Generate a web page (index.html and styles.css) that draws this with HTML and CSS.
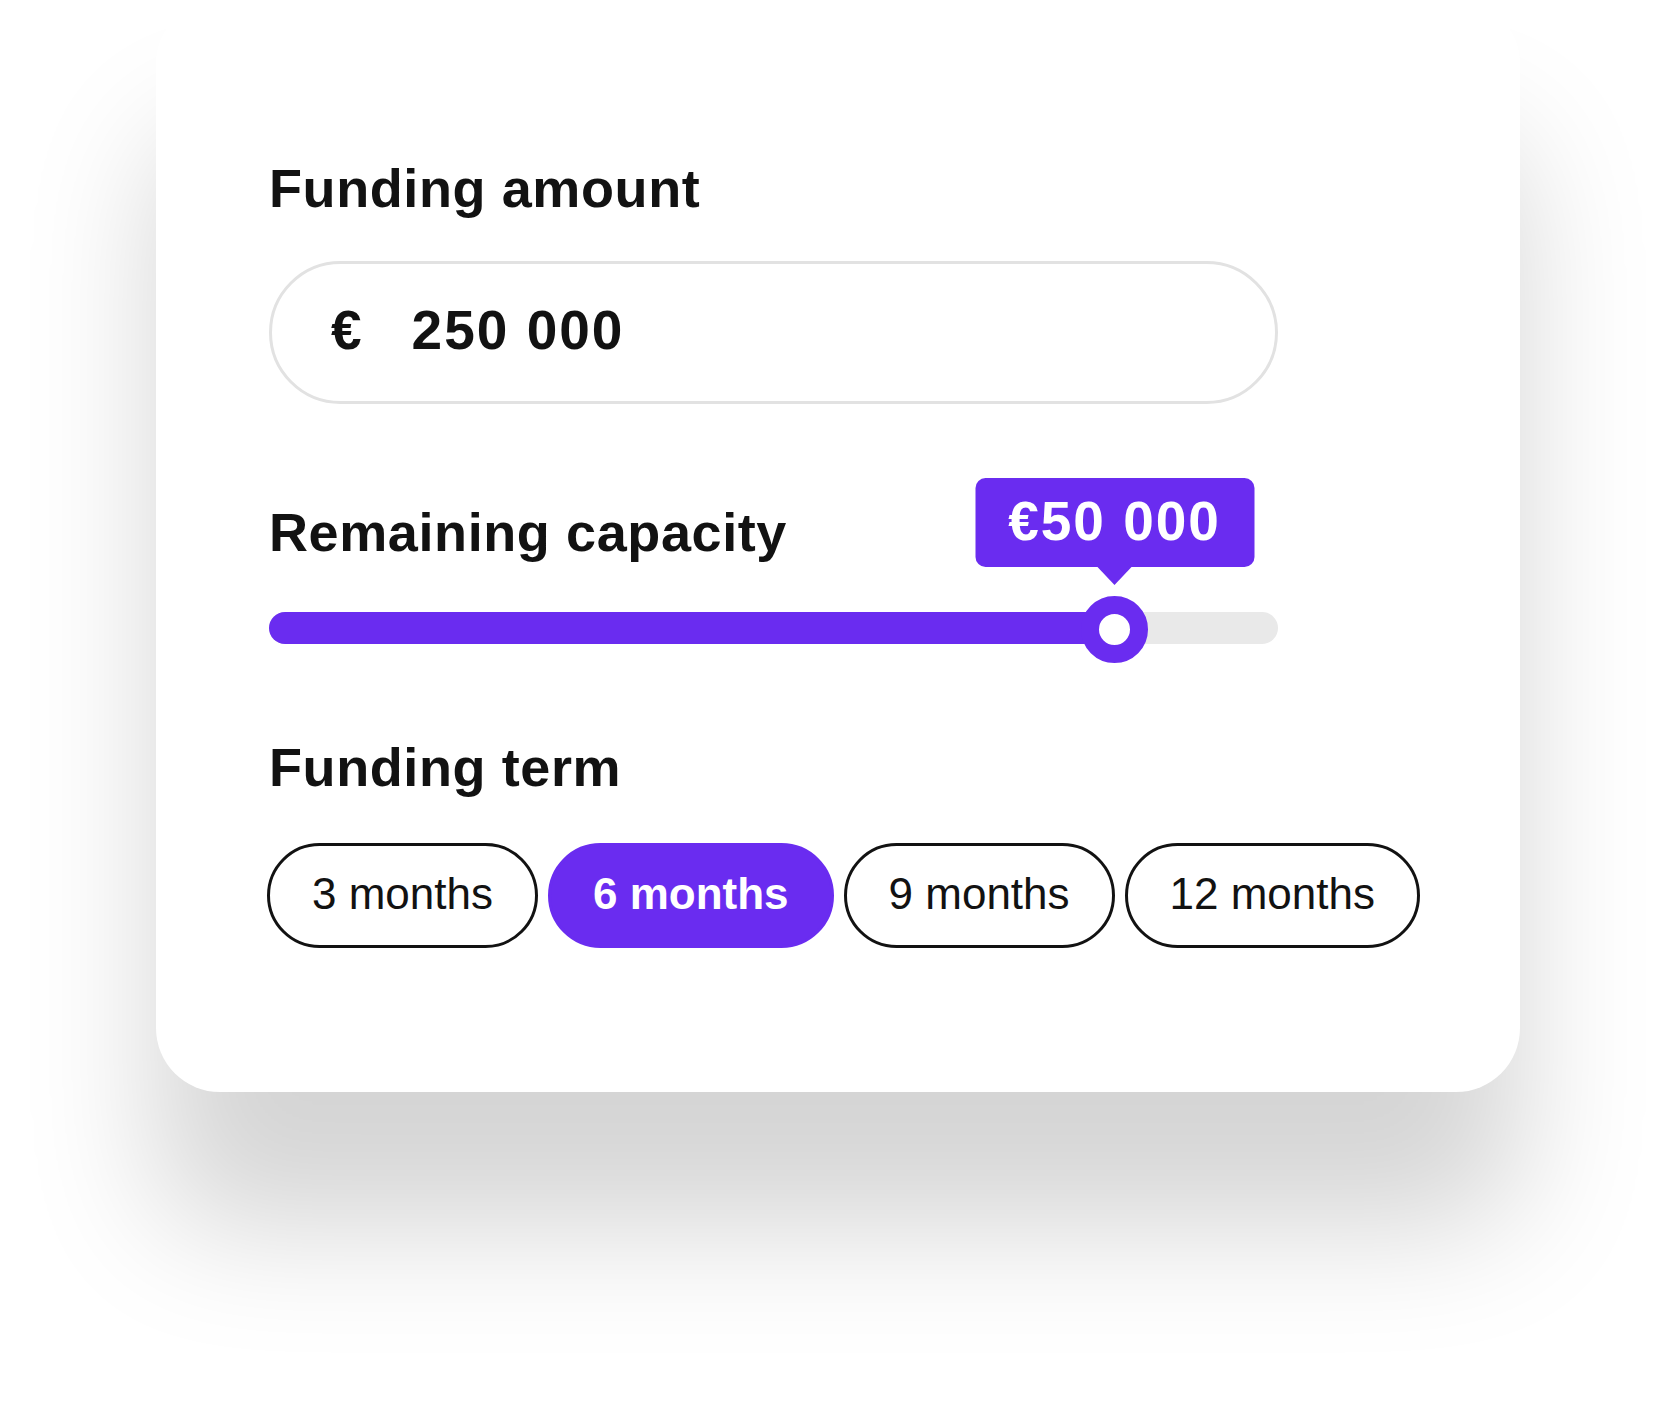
FILE: index.html
```html
<!DOCTYPE html>
<html lang="en">
<head>
    <meta charset="UTF-8">
    <meta name="viewport" content="width=device-width, initial-scale=1.0">
    <title>Funding calculator</title>
    <link rel="stylesheet" href="styles.css">
</head>
<body>
    <div class="card">
        <h2 class="label">Funding amount</h2>
        <div class="amount-box">
            <span class="currency">€</span>
            <span class="amount">250 000</span>
        </div>

        <h2 class="label label-capacity">Remaining capacity</h2>
        <div class="slider">
            <div class="slider-fill" style="width: 83.75%"></div>
            <div class="slider-thumb" style="left: 83.75%">
                <div class="tooltip">€50 000</div>
            </div>
        </div>

        <h2 class="label label-term">Funding term</h2>
        <div class="terms">
            <button class="term">3 months</button>
            <button class="term active">6 months</button>
            <button class="term">9 months</button>
            <button class="term">12 months</button>
        </div>
    </div>
</body>
</html>
```

FILE: styles.css
```css
body {
    margin: 0;
    padding: 0 0 310px;
    min-height: 1402px;
    box-sizing: border-box;
    background-color: #ffffff;
    font-family: "Liberation Sans", Arial, sans-serif;
    color: #121212;
}

.card {
    margin-left: 156px;
    width: 1364px;
    height: 1092px;
    box-sizing: border-box;
    padding: 161px 0 0 113px;
    background-color: #ffffff;
    border-radius: 64px;
    box-shadow: 0 135px 130px rgba(0, 0, 0, 0.17);
    display: flex;
    flex-direction: column;
}

.label {
    margin: 0;
    font-size: 54px;
    line-height: 54px;
    font-weight: 700;
    letter-spacing: 0.6px;
}

.label-capacity {
    margin-top: 101px;
}

.label-term {
    margin-top: 96px;
}

.amount-box {
    margin-top: 46px;
    width: 1009px;
    height: 143px;
    box-sizing: border-box;
    border: 3px solid #e2e2e2;
    border-radius: 72px;
    display: flex;
    align-items: center;
    padding: 0 0 5px 59px;
    font-size: 55px;
    line-height: 55px;
    font-weight: 700;
}

.currency {
    margin-right: 50px;
}

.amount {
    letter-spacing: 2px;
}

.slider {
    position: relative;
    margin-top: 53px;
    width: 1009px;
    height: 32px;
    border-radius: 16px;
    background-color: #e9e9e9;
}

.slider-fill {
    height: 100%;
    border-radius: 16px;
    background-color: #6a2cf0;
}

.slider-thumb {
    position: absolute;
    top: -16px;
    width: 67px;
    height: 67px;
    box-sizing: border-box;
    margin-left: -33px;
    border: 18px solid #6a2cf0;
    border-radius: 50%;
    background-color: #ffffff;
}

.tooltip {
    position: absolute;
    bottom: 78px;
    left: 50%;
    transform: translateX(-50%);
    width: 279px;
    height: 89px;
    box-sizing: border-box;
    padding-top: 16px;
    border-radius: 10px;
    background-color: #6a2cf0;
    color: #ffffff;
    font-size: 55px;
    line-height: 55px;
    font-weight: 700;
    letter-spacing: 2px;
    text-align: center;
    white-space: nowrap;
}

.tooltip::after {
    content: "";
    position: absolute;
    left: 50%;
    bottom: -18px;
    margin-left: -17px;
    border-left: 17px solid transparent;
    border-right: 17px solid transparent;
    border-top: 18px solid #6a2cf0;
}

.terms {
    margin-top: 49px;
    margin-left: -2px;
    display: flex;
    gap: 10px;
    width: max-content;
}

.term {
    height: 105px;
    padding: 0 42px 3px;
    border: 3px solid #121212;
    border-radius: 53px;
    background-color: #ffffff;
    color: #121212;
    font-family: "Liberation Sans", Arial, sans-serif;
    font-size: 44px;
    line-height: 44px;
    font-weight: 400;
    cursor: pointer;
}

.term.active {
    border-color: #6a2cf0;
    background-color: #6a2cf0;
    color: #ffffff;
    font-weight: 700;
}
```
